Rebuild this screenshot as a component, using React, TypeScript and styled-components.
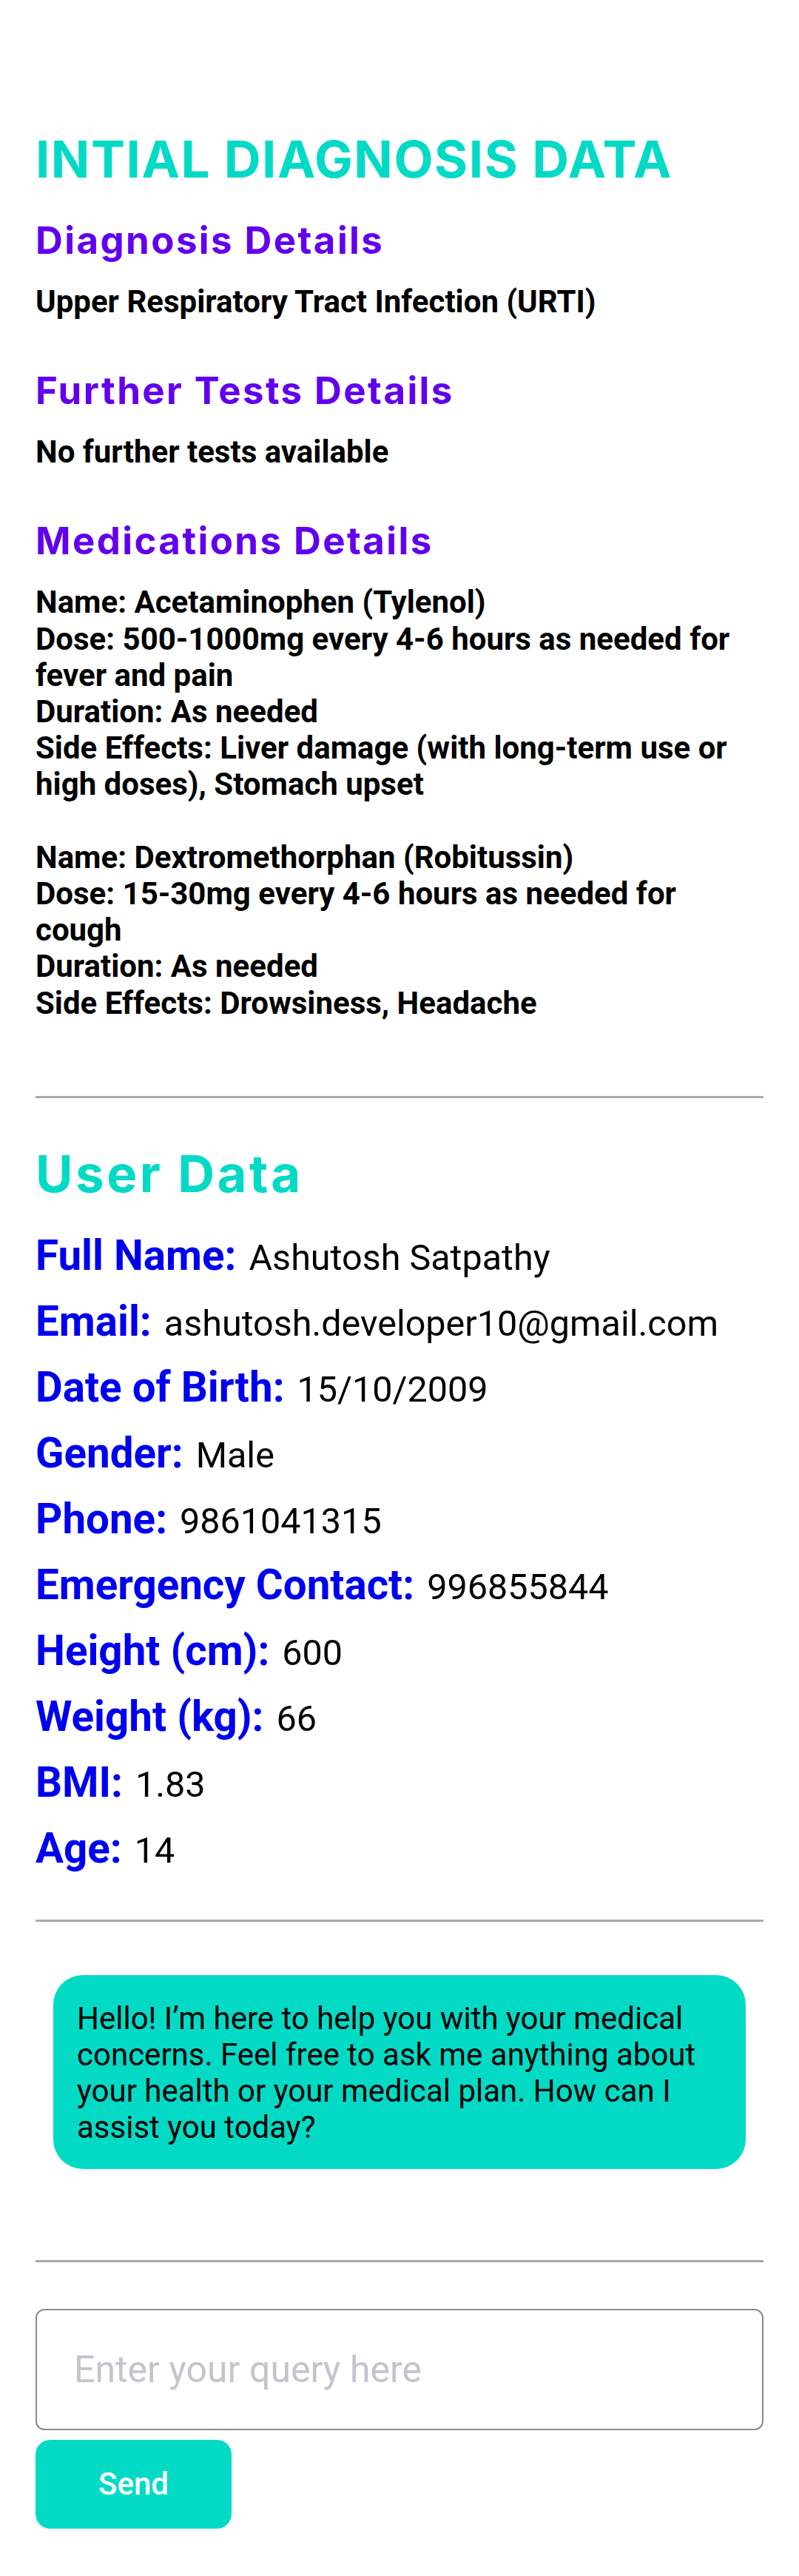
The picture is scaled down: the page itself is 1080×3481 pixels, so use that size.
import React from "react";
import styled, { createGlobalStyle } from "styled-components";

const GlobalStyle = createGlobalStyle`
  html, body {
    margin: 0;
    padding: 0;
    background: #ffffff;
  }
  * { box-sizing: border-box; }
`;

const Page = styled.div`
  display: flex;
  flex-direction: column;
  padding: 175px 48px 61px;
  background: #ffffff;
  font-family: Roboto, "Liberation Sans", sans-serif;
`;

const Title = styled.h1<{ $gap?: number; $spacing?: number }>`
  margin: ${(p) => p.$gap ?? 0}px 0 0;
  font-family: Inter, "Noto Sans", sans-serif;
  font-weight: 700;
  font-size: 69px;
  line-height: 80px;
  color: #03dac6;
  letter-spacing: ${(p) => p.$spacing ?? 1.5}px;
`;

const SubHeading = styled.h2<{ $first?: boolean }>`
  margin: ${(p) => (p.$first ? 40 : 66)}px 0 0;
  font-family: Inter, "Noto Sans", sans-serif;
  font-weight: 700;
  font-size: 51px;
  line-height: 60px;
  letter-spacing: 2.4px;
  color: #6200ee;
`;

const BodyText = styled.p`
  margin: 28px 0 0;
  font-family: Roboto, "Liberation Sans", sans-serif;
  font-weight: 700;
  font-size: 42px;
  line-height: 49.2px;
  color: #000000;
  white-space: pre-line;
`;

const Divider = styled.hr<{ $before: number }>`
  margin: ${(p) => p.$before}px 0 0;
  border: none;
  height: 3px;
  background: #a9a9a9;
`;

const InfoList = styled.div`
  display: flex;
  flex-direction: column;
  margin-top: 27px;
`;

const InfoRow = styled.div`
  display: flex;
  align-items: baseline;
  gap: 17px;
  height: 89px;
  white-space: nowrap;
`;

const InfoLabel = styled.span`
  font-family: Roboto, "Liberation Sans", sans-serif;
  font-weight: 700;
  font-size: 56.5px;
  line-height: 89px;
  color: #0000f0;
`;

const InfoValue = styled.span`
  font-family: Roboto, "Liberation Sans", sans-serif;
  font-weight: 400;
  font-size: 48.5px;
  line-height: 1;
  color: #000000;
`;

const ChatArea = styled.div`
  display: flex;
  flex-direction: column;
  margin-top: 72px;
  padding: 0 24px;
`;

const Bubble = styled.div`
  background: #03dac6;
  border-radius: 40px;
  padding: 34px 32px 31px;
  font-family: Roboto, "Liberation Sans", sans-serif;
  font-weight: 400;
  font-size: 42px;
  line-height: 49.2px;
  color: #000000;
`;

const QueryInput = styled.input`
  margin-top: 63px;
  width: 100%;
  height: 164px;
  border: 2px solid #8a8a8a;
  border-radius: 12px;
  padding: 0 50px;
  font-family: Roboto, "Liberation Sans", sans-serif;
  font-size: 50px;
  color: #000000;
  background: #ffffff;
  outline: none;
  &::placeholder {
    color: #c5c4cc;
  }
`;

const SendButton = styled.button`
  margin-top: 13px;
  width: 265px;
  height: 120px;
  border: none;
  border-radius: 20px;
  background: #03dac6;
  color: #ffffff;
  font-family: Roboto, "Liberation Sans", sans-serif;
  font-weight: 500;
  font-size: 42px;
  cursor: pointer;
`;

const medications = [
  {
    name: "Acetaminophen (Tylenol)",
    dose: "500-1000mg every 4-6 hours as needed for fever and pain",
    duration: "As needed",
    side: "Liver damage (with long-term use or high doses), Stomach upset",
  },
  {
    name: "Dextromethorphan (Robitussin)",
    dose: "15-30mg every 4-6 hours as needed for cough",
    duration: "As needed",
    side: "Drowsiness, Headache",
  },
];

const medText = medications
  .map(
    (m) =>
      `Name: ${m.name}\nDose: ${m.dose}\nDuration: ${m.duration}\nSide Effects: ${m.side}`
  )
  .join("\n\n");

const userData: [string, string][] = [
  ["Full Name:", "Ashutosh Satpathy"],
  ["Email:", "ashutosh.developer10@gmail.com"],
  ["Date of Birth:", "15/10/2009"],
  ["Gender:", "Male"],
  ["Phone:", "9861041315"],
  ["Emergency Contact:", "996855844"],
  ["Height (cm):", "600"],
  ["Weight (kg):", "66"],
  ["BMI:", "1.83"],
  ["Age:", "14"],
];

export default function App() {
  return (
    <>
      <GlobalStyle />
      <Page>
        <Title>INTIAL DIAGNOSIS DATA</Title>

        <SubHeading $first>Diagnosis Details</SubHeading>
        <BodyText>Upper Respiratory Tract Infection (URTI)</BodyText>

        <SubHeading>Further Tests Details</SubHeading>
        <BodyText>No further tests available</BodyText>

        <SubHeading>Medications Details</SubHeading>
        <BodyText>{medText}</BodyText>

        <Divider $before={101} />

        <Title $gap={62} $spacing={3.5}>User Data</Title>
        <InfoList>
          {userData.map(([label, value]) => (
            <InfoRow key={label}>
              <InfoLabel>{label}</InfoLabel>
              <InfoValue>{value}</InfoValue>
            </InfoRow>
          ))}
        </InfoList>

        <Divider $before={51} />

        <ChatArea>
          <Bubble>
            Hello! I’m here to help you with your medical concerns. Feel free to
            ask me anything about your health or your medical plan. How can I
            assist you today?
          </Bubble>
        </ChatArea>

        <Divider $before={123} />

        <QueryInput placeholder="Enter your query here" />
        <SendButton>Send</SendButton>
      </Page>
    </>
  );
}
